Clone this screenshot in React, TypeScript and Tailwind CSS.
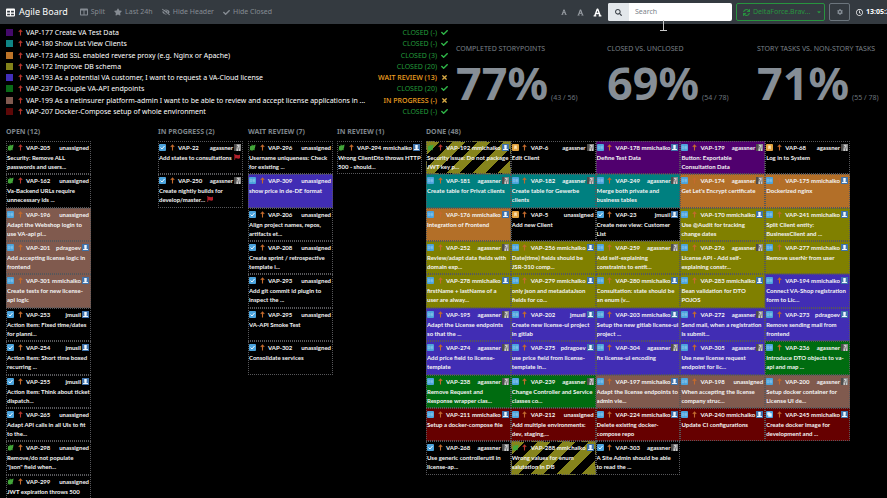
import type { ReactNode } from 'react';
import { FaTable, FaColumns, FaStar, FaEyeSlash, FaCheck, FaTimes, FaFont, FaSearch, FaCog, FaRegClock, FaFlag, FaCaretDown, FaSync } from 'react-icons/fa';

type Kind = 'task' | 'sub' | 'bug' | 'story' | 'copy';
type Tone = 'black' | 'purple' | 'teal' | 'orange' | 'olive' | 'indigo' | 'green' | 'brown' | 'red' | 'stripes';
type Card = { id: number; who: string; text: string; kind: Kind; tone: Tone; hot?: boolean; flag?: boolean };

const tones: Record<Tone, string> = {
  black: 'bg-black',
  purple: 'bg-[#50006e]',
  teal: 'bg-[#008080]',
  orange: 'bg-[#b36f28]',
  olive: 'bg-[#808000]',
  indigo: 'bg-[#412db4]',
  green: 'bg-[#006c10]',
  brown: 'bg-[#805a4e]',
  red: 'bg-[#660000]',
  stripes: 'bg-[repeating-linear-gradient(135deg,#86841c_0px,#86841c_9px,#000_9px,#000_18px)]',
};

const c = (id: number, who: string, text: string, tone: Tone = 'black', kind: Kind = 'sub', extra: Partial<Card> = {}): Card => ({ id, who, text, tone, kind, ...extra });

const NONE = 'unassigned';
const AG = 'agassner';
const MM = 'mmichalko';
const JM = 'jmusil';
const PD = 'pdragoev';

const open: Card[] = [
  c(205, NONE, 'Security: Remove ALL\npasswords and users...', 'black', 'bug', { hot: true }),
  c(162, NONE, 'Va-Backend URLs require\nunnecessary ids ...', 'black', 'bug', { hot: true }),
  c(196, NONE, 'Adapt the Webshop login to\nuse VA-api pl...', 'brown'),
  c(201, PD, 'Add accepting license logic in\nfrontend', 'brown'),
  c(301, MM, 'Create tests for new license-\napi logic', 'brown'),
  c(253, JM, 'Action Item: Fixed time/dates\nfor planni...', 'black', 'task'),
  c(254, JM, 'Action Item: Short time boxed\nrecurring ...', 'black', 'task'),
  c(255, JM, 'Action Item: Think about ticket\ndispatch...', 'black', 'task'),
  c(265, NONE, 'Adapt API calls in all UIs to fit\nto the...', 'black', 'task', { hot: true }),
  c(298, NONE, 'Remove/do not populate\n"json" field when...', 'black', 'bug'),
  c(299, NONE, 'JWT expiration throws 500\nerror...', 'black', 'bug'),
];

const progress: Card[] = [
  c(22, AG, 'Add states to consultations', 'black', 'task', { flag: true }),
  c(250, AG, 'Create nightly builds for\ndevelop/master...', 'black', 'task', { flag: true }),
];

const wait: Card[] = [
  c(296, NONE, 'Username uniqueness: Check\nfor existing ...', 'black', 'bug'),
  c(309, NONE, 'show price in de-DE format', 'indigo'),
  c(206, NONE, 'Align project names, repos,\nartifacts et...', 'black', 'task'),
  c(208, NONE, 'Create sprint / retrospective\ntemplate i...', 'black', 'task'),
  c(293, NONE, 'Add git commit id plugin to\ninspect the ...', 'black', 'task'),
  c(295, NONE, 'VA-API Smoke Test', 'black', 'task'),
  c(302, NONE, 'Consolidate services', 'black', 'task'),
];

const review: Card[] = [c(294, MM, 'Wrong ClientDto throws HTTP\n500 - should...', 'black', 'bug')];

const done: Card[] = [
  c(192, MM, 'Security issue: Do not package\nJWT key p...', 'stripes', 'bug', { hot: true }),
  c(6, AG, 'Edit Client', 'black', 'story'),
  c(178, MM, 'Define Test Data', 'purple'),
  c(179, AG, 'Button: Exportable\nConsultation Data', 'purple'),
  c(68, AG, 'Log in to System', 'black', 'story'),
  c(181, AG, 'Create table for Privat clients', 'teal'),
  c(182, AG, 'Create table for Gewerbe\nclients', 'teal'),
  c(249, AG, 'Merge both private and\nbusiness tables', 'teal'),
  c(174, AG, "Get Let's Encrypt certificate", 'orange'),
  c(175, MM, 'Dockerized nginx', 'orange'),
  c(176, MM, 'Integration of Frontend', 'orange'),
  c(5, NONE, 'Add new Client', 'black', 'story'),
  c(23, JM, 'Create new view: Customer\nList', 'black', 'task'),
  c(170, MM, 'Use @Audit for tracking\nchange dates', 'olive'),
  c(241, MM, 'Split Client entity:\nBusinessClient and ...', 'olive'),
  c(252, AG, 'Review/adapt data fields with\ndomain exp...', 'olive'),
  c(256, MM, 'Date(time) fields should be\nJSR-310 comp...', 'olive'),
  c(259, AG, 'Add self-explaining\nconstraints to entit...', 'olive'),
  c(276, AG, 'License API - Add self-\nexplaining constr...', 'olive'),
  c(277, MM, 'Remove userNr from user', 'olive'),
  c(278, MM, 'firstName + lastName of a\nuser are alway...', 'olive'),
  c(279, MM, 'only json and metadataJson\nfields for co...', 'olive'),
  c(280, MM, 'Consultation: state should be\nan enum (v...', 'olive'),
  c(283, MM, 'Bean validation for DTO\nPOJOS', 'olive'),
  c(194, MM, 'Connect VA-Shop registration\nform to Lic...', 'indigo'),
  c(195, AG, 'Adapt the License endpoints\nso that the ...', 'indigo'),
  c(202, JM, 'Create new license-ui project\nin gitlab', 'indigo'),
  c(203, MM, 'Setup the new gitlab license-ui\nproject ...', 'indigo'),
  c(272, AG, 'Send mail, when a registration\nis submit...', 'indigo'),
  c(273, PD, 'Remove sending mail from\nfrontend', 'indigo'),
  c(274, AG, 'Add price field to license-\ntemplate', 'indigo'),
  c(275, PD, 'use price field from license-\ntemplate in...', 'indigo'),
  c(304, AG, 'fix license-ui encoding', 'indigo'),
  c(305, AG, 'Use new license request\nendpoint for lic...', 'indigo'),
  c(236, AG, 'Introduce DTO objects to va-\napi and map ...', 'green'),
  c(238, AG, 'Remove Request and\nResponse wrapper clas...', 'green'),
  c(239, AG, 'Change Controller and Service\nclasses co...', 'green'),
  c(197, MM, 'Adapt the license endpoints to\nadmin vie...', 'brown'),
  c(198, NONE, 'When accepting the license\ncompany struc...', 'brown'),
  c(200, AG, 'Setup docker container for\nLicense UI de...', 'brown'),
  c(211, MM, 'Setup a docker-compose file', 'red'),
  c(212, NONE, 'Add multiple environments:\ndev, staging,...', 'red'),
  c(224, MM, 'Delete existing docker-\ncompose repo', 'red'),
  c(240, MM, 'Update CI configurations', 'red'),
  c(245, MM, 'Create docker image for\ndevelopment and ...', 'red', 'copy'),
  c(268, AG, 'Use generic controllerutil in\nlicense-ap...', 'black', 'task'),
  c(288, MM, 'Wrong values for enum\nsalutation in DB', 'stripes', 'bug', { hot: true }),
  c(303, AG, 'A Site Admin should be able\nto read the ...', 'black', 'task'),
];

const stories = [
  { id: 177, text: 'Create VA Test Data', state: 'CLOSED (-)', swatch: 'bg-[#450a6b]' },
  { id: 180, text: 'Show List View Clients', state: 'CLOSED (-)', swatch: 'bg-[#0f8585]' },
  { id: 173, text: 'Add SSL enabled reverse proxy (e.g. Nginx or Apache)', state: 'CLOSED (3)', swatch: 'bg-[#bd7428]' },
  { id: 172, text: 'Improve DB schema', state: 'CLOSED (20)', swatch: 'bg-[#83831a]' },
  { id: 193, text: 'As a potential VA customer, I want to request a VA-Cloud license', state: 'WAIT REVIEW (13)', swatch: 'bg-[#422fba]', pending: true },
  { id: 237, text: 'Decouple VA-API endpoints', state: 'CLOSED (20)', swatch: 'bg-[#0a6b18]' },
  { id: 199, text: 'As a netinsurer platform-admin I want to be able to review and accept license applications in ...', state: 'IN PROGRESS (-)', swatch: 'bg-[#805a50]', pending: true },
  { id: 207, text: 'Docker-Compose setup of whole environment', state: 'CLOSED (-)', swatch: 'bg-[#5e0808]' },
];

const stats = [
  { label: 'COMPLETED STORYPOINTS', value: '77%', detail: '(43 / 56)' },
  { label: 'CLOSED VS. UNCLOSED', value: '69%', detail: '(54 / 78)' },
  { label: 'STORY TASKS VS. NON-STORY TASKS', value: '71%', detail: '(55 / 78)' },
];

function Priority({ hot }: { hot?: boolean }) {
  return (
    <svg viewBox="0 0 10 14" className={`h-[7px] w-[5px] shrink-0 ${hot ? 'text-[#b8362c]' : 'text-[#c46a2c]'}`} fill="none" stroke="currentColor" strokeWidth="2.200" aria-hidden="true">
      <path d="M1.500 6 5 2l3.500 4M5 3v10" />
    </svg>
  );
}

function KindIcon({ kind }: { kind: Kind }) {
  if (kind === 'bug') {
    return (
      <svg viewBox="0 0 14 14" className="size-[7px] shrink-0" aria-hidden="true">
        <path d="M2 6C4 2.500 7 3 9.500 2.500L13 1l-.5 4c-.4 4-2 7-5.500 8-3 .8-5.500-1-5.500-4z" fill="#43a639" />
        <path d="m1 3 3 3M1 13l3-3M6 1l1 3M12 12l-3-2" stroke="#43a639" strokeWidth="1.400" />
      </svg>
    );
  }
  return (
    <svg viewBox="0 0 14 14" className="size-[7px] shrink-0" fill="none" aria-hidden="true">
      <rect width="14" height="14" rx="2" fill={kind === 'story' ? '#e0a03c' : '#4ba3dc'} />
      {kind === 'task' && <path d="m3 7 3 3 5-6" stroke="#fff" strokeWidth="1.800" />}
      {kind === 'sub' && <path d="M2.500 4.500v5h3v-5zM8 4.500h3.500v5H8zM8 7h3" stroke="#94cbed" strokeWidth="1.200" />}
      {kind === 'story' && <path d="M4.500 3h5v8L7 9l-2.500 2z" fill="#fbe3b5" />}
      {kind === 'copy' && <path d="M2.500 2.500h6v2h3v7h-7v-3h-2z" fill="#e8f4fc" />}
    </svg>
  );
}

function Avatar({ who }: { who: string }) {
  if (who === AG) {
    return (
      <svg viewBox="0 0 14 14" className="size-[7px] shrink-0" aria-hidden="true">
        <rect width="14" height="14" fill="#8b8b8b" />
        <path d="M0 0h5v14H0z" fill="#4d4d4d" />
        <path d="M6 2h5v5H6zM5 9h7v5H5z" fill="#c9c9c9" />
        <path d="M7 4h1v2H7zM8 9h1v5H8z" fill="#333" />
      </svg>
    );
  }
  return (
    <svg viewBox="0 0 14 14" className="size-[7px] shrink-0" aria-hidden="true">
      <rect width="14" height="14" fill="#3f73ab" />
      <path d="M4.500 2h5v5L8.500 9 12 10.500V12H2v-1.500L5.500 9l-1-2z" fill="#eef5fc" />
    </svg>
  );
}

function IssueCard({ card }: { card: Card }) {
  return (
    <article className={`flex min-w-0 flex-col overflow-hidden border border-dotted border-[#57575a] ${tones[card.tone]} font-['Lato','Open_Sans',sans-serif] text-[6px] font-bold leading-[9px] text-[#f4f4f4]`}>
      <header className="flex h-[11px] shrink-0 items-center">
        <KindIcon kind={card.kind} />
        <span className="flex w-[12px] shrink-0 justify-center">
          <Priority hot={card.hot} />
        </span>
        <span className="whitespace-nowrap">VAP-{card.id}</span>
        <span className="ml-auto flex items-center gap-px whitespace-nowrap pr-px">
          {card.who}
          {card.who !== NONE && <Avatar who={card.who} />}
        </span>
      </header>
      <p className="whitespace-pre">
        {card.text}
        {card.flag && <FaFlag className="ml-[2px] inline size-[6px] align-baseline text-[#b3202a]" />}
      </p>
    </article>
  );
}

function Column({ title, cards, grid = 'w-[85px] grid-cols-1' }: { title: string; cards: Card[]; grid?: string }) {
  return (
    <section>
      <h2 className="mb-[3px] whitespace-nowrap text-[7px] font-bold leading-[12px] text-[#7d848a]">{title}</h2>
      <div className={`grid h-[367px] grid-rows-11 ${grid}`}>
        {cards.map((card) => (
          <IssueCard key={card.id} card={card} />
        ))}
      </div>
    </section>
  );
}

function NavButton({ icon, label }: { icon: ReactNode; label: string }) {
  return (
    <button type="button" className="flex items-center gap-[3px] text-[7px] text-[#868c93]">
      {icon}
      {label}
    </button>
  );
}

export default function App() {
  return (
    <div className="h-screen overflow-hidden bg-black font-['Noto_Sans','Open_Sans',sans-serif] text-[7px] text-white">
      <header className="flex h-[24px] items-center justify-between whitespace-nowrap bg-[#343a40] pl-[6px]">
        <nav className="flex items-center gap-[9px]">
          <h1 className="mr-[3px] flex items-center gap-[4px] text-[9px]">
            <FaTable className="size-[9px]" />
            Agile Board
          </h1>
          <NavButton icon={<FaColumns className="size-[8px]" />} label="Split" />
          <NavButton icon={<FaStar className="size-[8px]" />} label="Last 24h" />
          <NavButton icon={<FaEyeSlash className="size-[8px]" />} label="Hide Header" />
          <NavButton icon={<FaCheck className="size-[7px]" />} label="Hide Closed" />
        </nav>
        <div className="flex w-[326px] shrink-0 items-center">
          <div className="flex w-[47px] shrink-0 items-center justify-between pr-[6px] text-[#9a9fa5]">
            <button type="button" aria-label="Small text"><FaFont className="size-[6px]" /></button>
            <button type="button" aria-label="Medium text"><FaFont className="size-[7px]" /></button>
            <button type="button" aria-label="Large text" className="text-white"><FaFont className="size-[9px]" /></button>
          </div>
          <label className="relative flex h-[18px] w-[124px] shrink-0 overflow-visible rounded-[2px] bg-white">
            <span className="flex w-[21px] items-center justify-center rounded-l-[2px] bg-[#e3e7eb] text-[#3d434a]">
              <FaSearch className="size-[7px]" />
            </span>
            <input type="search" aria-label="Search" placeholder="Search" className="w-[100px] bg-white pl-[6px] text-[7px] text-[#495057] outline-none placeholder:text-[#7c838a]" />
            <svg viewBox="0 0 7 12" className="absolute left-[52px] top-[17px] h-[12px] w-[7px]" fill="none" stroke="#c9c9c9" aria-hidden="true">
              <path d="M3.500 0v11M0 10.500h7" />
            </svg>
          </label>
          <div className="ml-[4px] flex h-[18px] w-[89px] shrink-0 items-center gap-[3px] rounded-[2px] border border-[#28943f] px-[6px] text-[#28943f]">
            <FaSync className="size-[7px] shrink-0" />
            <select aria-label="Board" className="w-[60px] shrink-0 appearance-none bg-transparent text-[7px] outline-none">
              <option>DeltaForce.Brav...</option>
            </select>
            <FaCaretDown className="size-[6px] shrink-0" />
          </div>
          <button type="button" aria-label="Settings" className="ml-[4px] flex h-[18px] w-[21px] shrink-0 items-center justify-center rounded-[2px] border border-[#6c757d] text-[#868e96]">
            <FaCog className="size-[6px]" />
          </button>
          <time className="ml-[6px] flex shrink-0 items-center gap-[3px] font-bold">
            <FaRegClock className="size-[7px]" />
            13:05:2
          </time>
        </div>
      </header>

      <div className="flex pl-[6px]">
        <ul className="mt-[3px] grid h-[90px] w-[442px] shrink-0 grid-rows-8">
          {stories.map((s) => (
            <li key={s.id} className="flex items-center whitespace-nowrap leading-[11px]">
              <span className={`size-[7px] ${s.swatch}`} />
              <span className="flex w-[13px] justify-end pr-[3px]">
                <Priority hot />
              </span>
              <span>VAP-{s.id} {s.text}</span>
              <span className={`ml-auto ${s.pending ? 'font-medium text-[#f0a020]' : 'text-[#239a3b]'}`}>{s.state}</span>
              <span className={`ml-[4px] ${s.pending ? 'text-[#d9ab45]' : 'text-[#2fb548]'}`}>
                {s.pending ? <FaTimes className="size-[7px]" /> : <FaCheck className="size-[7px]" />}
              </span>
            </li>
          ))}
        </ul>
        <dl className="ml-[8px] mt-[19px] grid grow grid-cols-[151px_150px_1fr] whitespace-nowrap text-[#868e96]">
          {stats.map((s) => (
            <div key={s.label}>
              <dt className="leading-[12px] text-[#7a8188]">{s.label}</dt>
              <dd className="flex items-baseline gap-[3px]">
                <span className="text-[45px] font-bold leading-[56px]">{s.value}</span>
                <span className="text-[7px] text-[#6c757d]">{s.detail}</span>
              </dd>
            </div>
          ))}
        </dl>
      </div>

      <main className="mt-px grid grid-cols-[152px_90px_89px_89px_1fr] pl-[6px] pt-[8px]">
        <Column title="OPEN (12)" cards={open} />
        <Column title="IN PROGRESS (2)" cards={progress} />
        <Column title="WAIT REVIEW (7)" cards={wait} />
        <Column title="IN REVIEW (1)" cards={review} />
        <Column title="DONE (48)" cards={done} grid="mr-[37px] grid-cols-5" />
      </main>
    </div>
  );
}
